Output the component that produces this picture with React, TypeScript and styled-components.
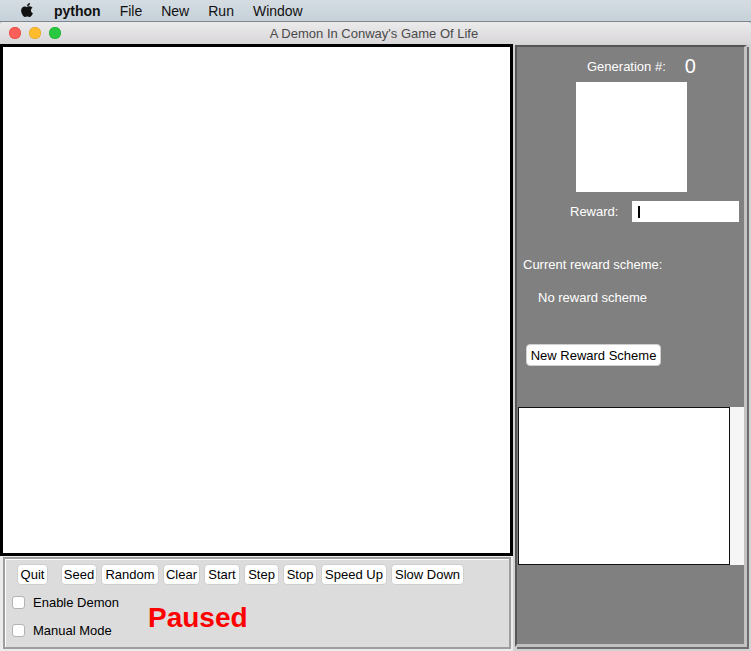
import React from "react";
import styled, { createGlobalStyle } from "styled-components";
import { FaApple } from "react-icons/fa";

const Global = createGlobalStyle`
  html, body {
    margin: 0;
    padding: 0;
    width: 751px;
    height: 651px;
    overflow: hidden;
    background: #c9d3da;
    font-family: "Liberation Sans", Arial, sans-serif;
  }
  * { box-sizing: border-box; }
`;

const Screen = styled.div`
  width: 751px;
  height: 651px;
  display: flex;
  flex-direction: column;
`;

const MenuBar = styled.div`
  height: 22px;
  display: flex;
  align-items: center;
  gap: 19px;
  padding-left: 20px;
  background: linear-gradient(#d5dde3, #c6d1d9);
  border-bottom: 1px solid #7d868c;
  font-size: 14px;
  color: #111;
`;

const AppleMark = styled.span`
  display: flex;
  width: 14px;
  margin-right: 1px;
  margin-top: -2px;
  color: #111;
`;

const MenuItem = styled.span<{ $bold?: boolean }>`
  font-weight: ${(p) => (p.$bold ? 700 : 400)};
  line-height: 22px;
`;

const TitleBar = styled.div`
  height: 22px;
  position: relative;
  display: flex;
  align-items: center;
  justify-content: center;
  padding-right: 3px;
  background: linear-gradient(#ecebec, #d8d6d8);
  border-radius: 4px 4px 0 0;
  font-size: 13px;
  color: #4a4a4a;
`;

const Lights = styled.div`
  position: absolute;
  left: 9px;
  top: 5px;
  display: flex;
  gap: 8px;
`;

const Light = styled.span<{ $c: string; $b: string }>`
  width: 12px;
  height: 12px;
  border-radius: 50%;
  background: ${(p) => p.$c};
  box-shadow: inset 0 0 0 0.5px ${(p) => p.$b};
`;

const Body = styled.div`
  flex: 1;
  display: flex;
  background: #ececec;
`;

const LeftColumn = styled.div`
  width: 513px;
  display: flex;
  flex-direction: column;
`;

const Canvas = styled.div`
  height: 512px;
  border: 3px solid #000;
  background: #fff;
`;

const BottomPanel = styled.div`
  flex: 1;
  margin: 1px 2px 2px 3px;
  border: 2px solid #9e9e9e;
  box-shadow: inset 1px 1px 0 #fff;
  background: #dcdcdc;
  padding: 5px 0 0 0;
  display: flex;
  flex-direction: column;
`;

const ButtonRow = styled.div`
  display: flex;
  gap: 4px;
  padding-left: 12px;
`;

const Button = styled.button<{ $w?: number; $gapAfter?: number }>`
  height: 21px;
  width: ${(p) => (p.$w ? `${p.$w}px` : "auto")};
  padding: 0;
  margin: 0 ${(p) => p.$gapAfter ?? 0}px 0 0;
  border: 1px solid #cfcfcf;
  border-radius: 4px;
  background: #fff;
  color: #000;
  font-family: "Liberation Sans", Arial, sans-serif;
  font-size: 13px;
  line-height: 19px;
  text-align: center;
  white-space: nowrap;
`;

const LowerRow = styled.div`
  display: flex;
  align-items: center;
  margin-top: 7px;
  padding-left: 7px;
`;

const CheckColumn = styled.div`
  width: 136px;
  display: flex;
  flex-direction: column;
  gap: 8px;
`;

const CheckRow = styled.label`
  height: 20px;
  display: flex;
  align-items: center;
  gap: 8px;
  font-size: 13px;
  color: #000;
`;

const CheckBox = styled.span`
  width: 13px;
  height: 13px;
  border: 1px solid #b3b3b3;
  border-radius: 3px;
  background: #fff;
`;

const Status = styled.div`
  font-family: "Liberation Sans", Arial, sans-serif;
  font-weight: 700;
  font-size: 28px;
  color: #ff0000;
  margin-top: 3px;
`;

const RightOuter = styled.div`
  width: 238px;
  background: #d2d2d2;
  padding: 1px 4px 4px 2px;
  display: flex;
`;

const RightPanel = styled.div`
  flex: 1;
  background: #808080;
  border-top: 2px solid #565656;
  border-left: 2px solid #565656;
  border-right: 3px solid #c2c2c2;
  border-bottom: 3px solid #c2c2c2;
  box-shadow: 2px 2px 0 #6e6e6e;
  display: flex;
  flex-direction: column;
  color: #fff;
  font-size: 13px;
`;

const GenRow = styled.div`
  height: 20px;
  margin-top: 9px;
  padding-left: 70px;
  display: flex;
  align-items: center;
  gap: 19px;
`;

const GenValue = styled.span`
  font-size: 20px;
`;

const Preview = styled.div`
  width: 111px;
  height: 110px;
  margin: 6px 0 0 59px;
  background: #fff;
`;

const RewardRow = styled.div`
  height: 21px;
  margin-top: 9px;
  padding-left: 53px;
  display: flex;
  align-items: center;
  gap: 14px;
`;

const Field = styled.div`
  width: 107px;
  height: 21px;
  background: #fff;
  display: flex;
  align-items: center;
  padding-left: 6px;
`;

const Caret = styled.span`
  width: 2px;
  height: 12px;
  background: #000;
`;

const TextLine = styled.div<{ $top: number; $left: number }>`
  height: 16px;
  line-height: 16px;
  margin-top: ${(p) => p.$top}px;
  padding-left: ${(p) => p.$left}px;
`;

const SchemeButton = styled(Button)`
  align-self: flex-start;
  height: 22px;
  margin: 38px 0 0 9px;
`;

const LogRow = styled.div`
  display: flex;
  margin: 41px 0 0 1px;
`;

const LogBox = styled.div`
  width: 212px;
  height: 158px;
  background: #fff;
  border: 1px solid #111;
`;

const LogScroll = styled.div`
  width: 14px;
  height: 158px;
  background: #f6f6f6;
`;

const buttons: { label: string; w: number; gap?: number }[] = [
  { label: "Quit", w: 31, gap: 9 },
  { label: "Seed", w: 36 },
  { label: "Random", w: 58 },
  { label: "Clear", w: 37 },
  { label: "Start", w: 36 },
  { label: "Step", w: 35 },
  { label: "Stop", w: 34 },
  { label: "Speed Up", w: 66 },
  { label: "Slow Down", w: 73 },
];

export default function App() {
  return (
    <Screen>
      <Global />
      <MenuBar>
        <AppleMark>
          <FaApple size={16} />
        </AppleMark>
        <MenuItem $bold>python</MenuItem>
        <MenuItem>File</MenuItem>
        <MenuItem>New</MenuItem>
        <MenuItem>Run</MenuItem>
        <MenuItem>Window</MenuItem>
      </MenuBar>
      <TitleBar>
        <Lights>
          <Light $c="#fc5f57" $b="#e0443e" />
          <Light $c="#fdbc2e" $b="#dea123" />
          <Light $c="#28c840" $b="#1aab29" />
        </Lights>
        A Demon In Conway's Game Of Life
      </TitleBar>
      <Body>
        <LeftColumn>
          <Canvas />
          <BottomPanel>
            <ButtonRow>
              {buttons.map((b) => (
                <Button key={b.label} $w={b.w} $gapAfter={b.gap}>
                  {b.label}
                </Button>
              ))}
            </ButtonRow>
            <LowerRow>
              <CheckColumn>
                <CheckRow>
                  <CheckBox />
                  Enable Demon
                </CheckRow>
                <CheckRow>
                  <CheckBox />
                  Manual Mode
                </CheckRow>
              </CheckColumn>
              <Status>Paused</Status>
            </LowerRow>
          </BottomPanel>
        </LeftColumn>
        <RightOuter>
          <RightPanel>
            <GenRow>
              <span>Generation #:</span>
              <GenValue>0</GenValue>
            </GenRow>
            <Preview />
            <RewardRow>
              <span>Reward:</span>
              <Field>
                <Caret />
              </Field>
            </RewardRow>
            <TextLine $top={35} $left={6}>
              Current reward scheme:
            </TextLine>
            <TextLine $top={17} $left={21}>
              No reward scheme
            </TextLine>
            <SchemeButton $w={135}>New Reward Scheme</SchemeButton>
            <LogRow>
              <LogBox />
              <LogScroll />
            </LogRow>
          </RightPanel>
        </RightOuter>
      </Body>
    </Screen>
  );
}
